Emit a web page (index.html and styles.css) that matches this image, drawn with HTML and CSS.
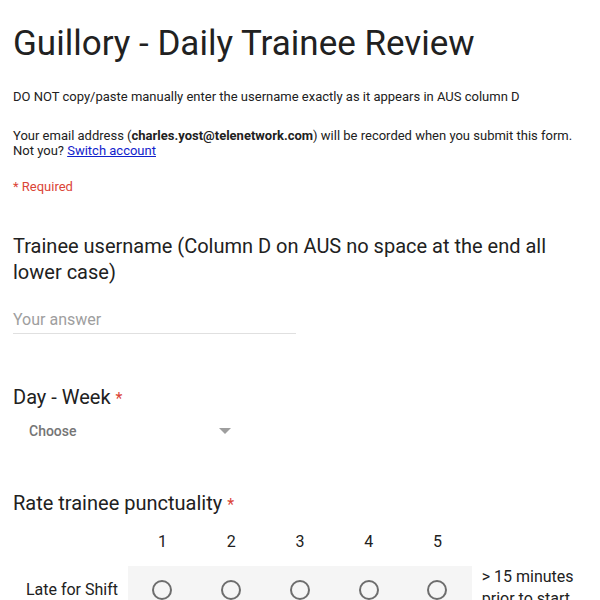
FILE: index.html
```html
<!DOCTYPE html>
<html>
<head>
<meta charset="utf-8">
<link rel="stylesheet" href="styles.css">
</head>
<body>
<div class="form">
  <h1 class="title">Guillory - Daily Trainee Review</h1>
  <p class="desc">DO NOT copy/paste manually enter the username exactly as it appears in AUS column D</p>
  <p class="email">Your email address (<b>charles.yost@telenetwork.com</b>) will be recorded when you submit this form.<br>Not you? <a href="#">Switch account</a></p>
  <p class="req">* Required</p>

  <div class="question q1">
    <div class="qtitle">Trainee username (Column D on AUS no space at the end all lower case)</div>
    <div class="answer">Your answer</div>
  </div>

  <div class="question q2">
    <div class="qtitle">Day - Week <span class="star">*</span></div>
    <div class="select"><span>Choose</span><span class="arrow"></span></div>
  </div>

  <div class="question q3">
    <div class="qtitle">Rate trainee punctuality <span class="star">*</span></div>
    <div class="grid">
      <div class="lbl"></div>
      <div class="num">1</div><div class="num">2</div><div class="num">3</div><div class="num">4</div><div class="num">5</div>
      <div class="lbl"></div>
      <div class="rowlbl">Late for Shift</div>
      <div class="cell"><span class="radio"></span></div>
      <div class="cell"><span class="radio"></span></div>
      <div class="cell"><span class="radio"></span></div>
      <div class="cell"><span class="radio"></span></div>
      <div class="cell"><span class="radio"></span></div>
      <div class="endlbl">&gt; 15 minutes prior to start</div>
    </div>
  </div>
</div>
</body>
</html>
```
FILE: styles.css
```css
html, body { margin: 0; padding: 0; background: #fff; }
body { font-family: Roboto, "Noto Sans", sans-serif; color: #212121; }
.form { padding: 0 13px; }
.title { font-size: 35px; font-weight: 400; margin: 0; padding-top: 24px; line-height: 40px; color: #212121; }
.desc { font-size: 13px; margin: 25px 0 0; line-height: 16px; }
.email { font-size: 13px; margin: 23px 0 0; line-height: 15px; }
.email b { font-weight: 700; }
.email a { color: #1122cc; }
.req { font-size: 13px; color: #db4437; margin: 21px 0 0; line-height: 16px; }
.qtitle { font-size: 20px; line-height: 26px; color: #212121; }
.star { color: #db4437; font-size: 16px; }
.q1 { padding-top: 38px; }
.answer { margin-top: 25px; width: 283px; font-size: 16px; color: #9e9e9e; line-height: 20px; padding-bottom: 3px; border-bottom: 1px solid #e0e0e0; }
.q2 { padding-top: 50px; }
.select { display: flex; justify-content: space-between; align-items: center; width: 202px; margin-left: 16px; margin-top: 11px; font-size: 14px; font-weight: 500; color: #757575; }
.arrow { width: 0; height: 0; border-left: 6px solid transparent; border-right: 6px solid transparent; border-top: 6px solid #9e9e9e; }
.q3 { padding-top: 51px; }
.grid { display: grid; grid-template-columns: 115px repeat(5, 68.75px) 110px; margin-top: 13px; }
.num { text-align: center; font-size: 16px; line-height: 22px; padding-bottom: 13px; }
.rowlbl { text-align: right; padding-right: 10px; font-size: 16px; line-height: 48px; }
.cell { background: #f5f5f5; display: flex; justify-content: center; align-items: center; height: 48px; }
.radio { width: 16px; height: 16px; border: 2px solid #6d6d6d; border-radius: 50%; }
.endlbl { font-size: 16px; line-height: 22px; padding-left: 10px; padding-top: 0; }
```
